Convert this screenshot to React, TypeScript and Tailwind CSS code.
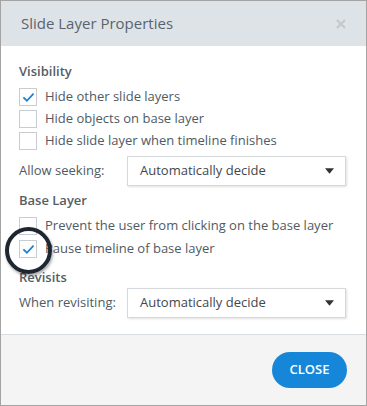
import { useState } from "react";

function Check({ checked, onClick }: { checked: boolean; onClick: () => void }) {
  return (
    <button
      onClick={onClick}
      className="flex h-[18px] w-[18px] shrink-0 items-center justify-center border border-[#c9cdd1] bg-white"
    >
      {checked && (
        <svg viewBox="0 0 16 16" className="h-[13px] w-[13px]" fill="none" stroke="#1f80d2" strokeWidth={2.2}>
          <path d="M2.5 8.5l3.5 3.5 7.5-8" strokeLinecap="square" />
        </svg>
      )}
    </button>
  );
}

function Row({ label, checked, onToggle }: { label: string; checked: boolean; onToggle: () => void }) {
  return (
    <div className="flex h-[22px] items-center gap-[8px]">
      <Check checked={checked} onClick={onToggle} />
      <span className="text-[13px] text-[#505a63]">{label}</span>
    </div>
  );
}

function Select({ label }: { label: string }) {
  return (
    <div className="flex items-center">
      <span className="w-[108px] text-[13px] text-[#505a63]">{label}</span>
      <div className="flex h-[30px] w-[219px] items-center justify-between border border-[#d5d9dc] bg-white pl-[12px] pr-[11px] shadow-[1px_1px_2px_rgba(0,0,0,0.12)]">
        <span className="text-[13px] text-[#3f474f]">Automatically decide</span>
        <svg viewBox="0 0 10 6" className="h-[6px] w-[9px]">
          <path d="M0 0h10L5 6z" fill="#333" />
        </svg>
      </div>
    </div>
  );
}

export default function App() {
  const [vals, setVals] = useState([true, false, false, false, true]);
  const toggle = (i: number) => setVals((v) => v.map((x, j) => (j === i ? !x : x)));

  return (
    <div className="flex h-[406px] w-[367px] flex-col border border-[#a4a4a4] bg-white font-['Open_Sans',sans-serif]">
      {/* Header */}
      <div className="flex h-[45px] shrink-0 items-center justify-between bg-[#dee3e7] pl-[20px] pr-[20px]">
        <span className="text-[15px] text-[#59636d]">Slide Layer Properties</span>
        <svg viewBox="0 0 10 10" className="h-[10px] w-[10px]" stroke="#c3c8cc" strokeWidth={2}>
          <path d="M1 1l8 8M9 1l-8 8" />
        </svg>
      </div>

      {/* Body */}
      <div className="relative flex flex-col px-[18px] pt-[16px]">
        <div className="text-[13px] font-semibold leading-[18px] text-[#555d65]">Visibility</div>
        <div className="mt-[6px] flex flex-col">
          <Row label="Hide other slide layers" checked={vals[0]} onToggle={() => toggle(0)} />
          <Row label="Hide objects on base layer" checked={vals[1]} onToggle={() => toggle(1)} />
          <Row label="Hide slide layer when timeline finishes" checked={vals[2]} onToggle={() => toggle(2)} />
        </div>
        <div className="mt-[4px]">
          <Select label="Allow seeking:" />
        </div>

        <div className="mt-[5px] text-[13px] font-semibold leading-[18px] text-[#555d65]">Base Layer</div>
        <div className="mt-[6px] flex flex-col gap-[1px]">
          <Row label="Prevent the user from clicking on the base layer" checked={vals[3]} onToggle={() => toggle(3)} />
          <Row label="Pause timeline of base layer" checked={vals[4]} onToggle={() => toggle(4)} />
        </div>

        <div className="mt-[8px] text-[13px] font-semibold leading-[18px] text-[#555d65]">Revisits</div>
        <div className="mt-[2px]">
          <Select label="When revisiting:" />
        </div>

        {/* annotation ring */}
        <div className="pointer-events-none absolute left-[4px] top-[181px] h-[47px] w-[47px] rounded-full border-[4px] border-[#1e2632] shadow-[1px_2px_3px_rgba(0,0,0,0.35)]" />
      </div>

      {/* Footer */}
      <div className="mt-auto flex h-[71px] items-center justify-end border-t border-[#d8dde1] bg-[#f4f4f4] pr-[19px]">
        <button className="h-[36px] w-[75px] rounded-full bg-[#1687d8] text-[13px] font-semibold text-white">
          CLOSE
        </button>
      </div>
    </div>
  );
}
